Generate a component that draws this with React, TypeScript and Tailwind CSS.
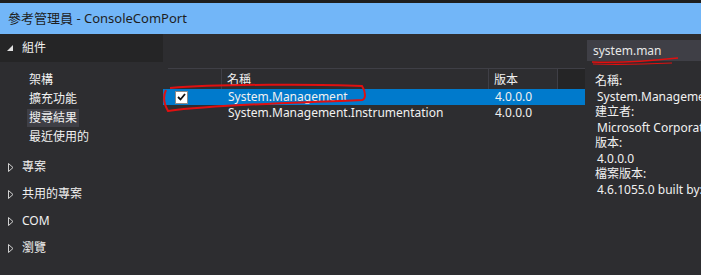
import React from 'react';

const FONT = { fontFamily: '"Noto Sans", "Noto Sans CJK TC", sans-serif' };

const SUB_ITEMS = ['架構', '擴充功能', '搜尋結果', '最近使用的'];
const GROUPS = ['專案', '共用的專案', 'COM', '瀏覽'];

const ROWS = [
  { name: 'System.Management', version: '4.0.0.0', checked: true, selected: true },
  { name: 'System.Management.Instrumentation', version: '4.0.0.0', checked: false, selected: false },
];

const DETAILS = [
  { label: '名稱:', value: 'System.Management' },
  { label: '建立者:', value: 'Microsoft Corporation' },
  { label: '版本:', value: '4.0.0.0' },
  { label: '檔案版本:', value: '4.6.1055.0 built by: NETFXREL2' },
];

const OpenArrow = () => (
  <svg width="6" height="9" viewBox="0 0 6 9" className="shrink-0">
    <path d="M0.5 0.5 L5 4.5 L0.5 8.5 Z" fill="none" stroke="#d0d0d0" strokeWidth="1" />
  </svg>
);

const App: React.FC = () => {
  return (
    <div className="relative w-[701px] h-[275px] overflow-hidden bg-[#2d2d30] flex flex-col text-[#f1f1f1]" style={FONT}>
      <div className="h-[3px] bg-[#1e1e1e]" />
      {/* title bar */}
      <div className="h-[31px] bg-[#72b6f8] flex items-center pl-[8px] text-[13px] text-[#1e1e1e]">
        參考管理員 - ConsoleComPort
      </div>

      <div className="flex flex-1">
        {/* left nav */}
        <div className="w-[163px] flex flex-col text-[12px]">
          <div className="h-[28px] bg-[#252526] flex items-center pl-[7px] gap-[9px]">
            <svg width="6" height="6" viewBox="0 0 6 6">
              <path d="M6 0 L6 6 L0 6 Z" fill="#e0e0e0" />
            </svg>
            <span>組件</span>
          </div>
          <div className="flex flex-col pt-[9px] pl-[27px] gap-[1px]">
            {SUB_ITEMS.map((s) => (
              <div
                key={s}
                className={`h-[18px] leading-[18px] px-[2px] w-fit ${s === '搜尋結果' ? 'bg-[#3f3f46]' : ''}`}
              >
                {s}
              </div>
            ))}
          </div>
          <div className="flex flex-col pt-[12px] gap-[9px]">
            {GROUPS.map((g) => (
              <div key={g} className="h-[18px] flex items-center pl-[8px] gap-[8px]">
                <OpenArrow />
                <span>{g}</span>
              </div>
            ))}
          </div>
        </div>

        {/* result list */}
        <div className="w-[422px] pt-[34px] text-[12px]">
          <div className="ml-[5px] h-[21px] flex border-t border-[#3f3f46]">
            <div className="w-[54px] border-r border-[#3f3f46]" />
            <div className="w-[267px] border-r border-[#3f3f46] pl-[5px] leading-[21px]">名稱</div>
            <div className="w-[69px] border-r border-[#3f3f46] pl-[5px] leading-[21px]">版本</div>
            <div className="flex-1 bg-[#252526]" />
          </div>
          <div className="flex flex-col">
            {ROWS.map((r) => (
              <div
                key={r.name}
                className={`h-[16px] flex items-center ${r.selected ? 'bg-[#007acc]' : ''}`}
              >
                <div className="w-[59px] pl-[12px] flex items-center">
                  {r.checked && (
                    <div className="w-[13px] h-[13px] bg-white border border-[#8a8a8a] flex items-center justify-center">
                      <svg width="9" height="8" viewBox="0 0 9 8">
                        <path d="M1 4 L3.5 6.5 L8 1" fill="none" stroke="#111" strokeWidth="1.8" />
                      </svg>
                    </div>
                  )}
                </div>
                <div className="w-[267px] pl-[6px] leading-[16px]">{r.name}</div>
                <div className="pl-[6px] leading-[16px]">{r.version}</div>
              </div>
            ))}
          </div>
        </div>

        {/* right detail panel */}
        <div className="flex-1 flex flex-col pl-[2px] pt-[6px] overflow-hidden">
          <div className="h-[21px] bg-[#3f3f46] flex items-center pl-[6px] text-[12px] text-[#e8e8e8] whitespace-nowrap">
            system.man
          </div>
          <div className="pt-[12px] pl-[8px] flex flex-col text-[12px] whitespace-nowrap leading-[15.5px]">
            {DETAILS.map((d) => (
              <React.Fragment key={d.label}>
                <div>{d.label}</div>
                <div className="pl-[2px]">{d.value}</div>
              </React.Fragment>
            ))}
          </div>
        </div>
      </div>

      {/* red annotation marks */}
      <svg className="absolute left-0 top-0 pointer-events-none" width="701" height="275" viewBox="0 0 701 275">
        <path
          d="M170 88 C220 84 320 84 362 86 C366 92 366 99 362 100 C300 103 220 104 168 111 C164 104 163 96 166 90"
          fill="none"
          stroke="#e01010"
          strokeWidth="2"
        />
        <path d="M592 62 C620 63 650 61 678 58" fill="none" stroke="#e01010" strokeWidth="1.6" />
        <path d="M593 64 C620 65 650 64 672 63" fill="none" stroke="#e01010" strokeWidth="1.2" />
      </svg>
    </div>
  );
};

export default App;
